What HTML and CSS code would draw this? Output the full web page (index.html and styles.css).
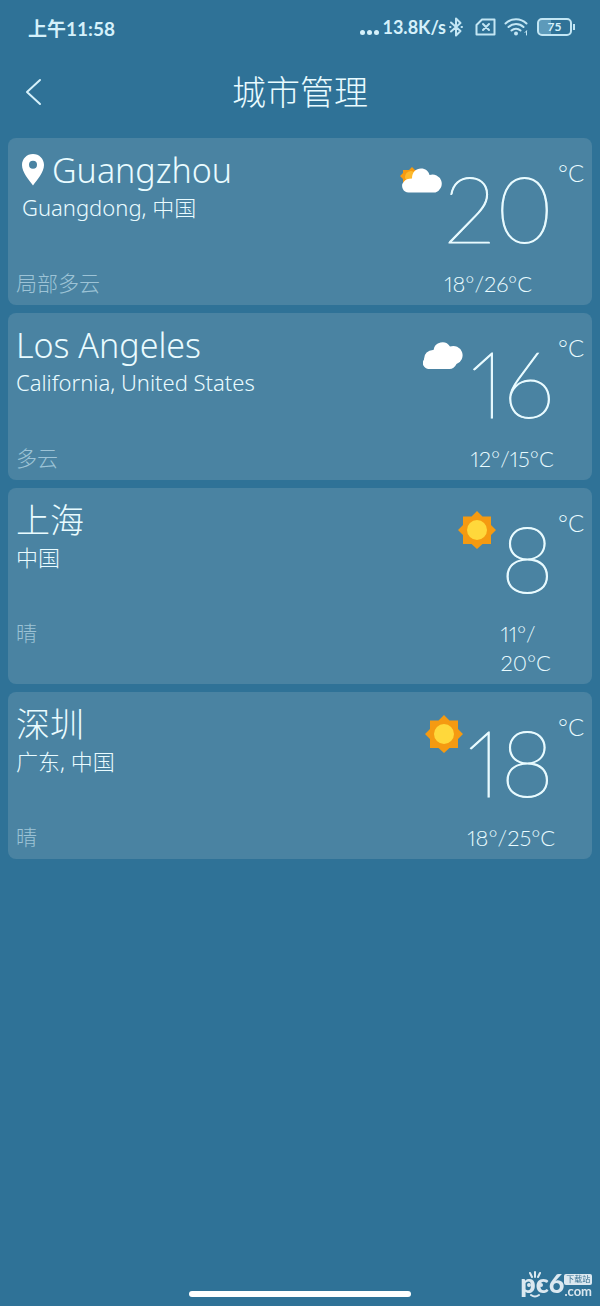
FILE: index.html
```
<!DOCTYPE html>
<html lang="zh-CN">
<head>
	<title>城市管理</title>
	<meta charset="UTF-8">
	<meta name="viewport" content="width=device-width, initial-scale=1">
	<link rel="stylesheet" href="styles.css">
</head>
<body>

<div class="status">
	<span class="clock">上午11:58</span>
	<span class="dots"><i></i><i></i><i></i></span>
	<span class="speed">13.8K/s</span>
	<svg class="bluetooth" width="14" height="20" viewBox="0 0 14 20"><path d="M2 5.500l9.500 8.500L7 18.500V1.500L11.500 6 2 14.500M1 10h.5M12.500 10h.5"/></svg>
	<svg class="sim" width="22" height="18" viewBox="0 0 22 18"><path d="M7 1.500h12.500v15H1.500V7zM8 6l6 6M14 6l-6 6"/></svg>
	<svg class="wifi" width="26" height="20" viewBox="0 0 26 20"><path d="M1.500 6.500a15 15 0 0 1 21 0M4.500 10a11 11 0 0 1 15 0M7.500 13.500a6.500 6.500 0 0 1 9 0"/><circle cx="12" cy="16.500" r="2"/><path class="thin" d="M22.500 14v4M21 15.500l1.500-1.500"/></svg>
	<span class="battery">75</span>
</div>

<header>
	<button class="back" aria-label="返回"><svg width="18" height="28" viewBox="0 0 18 28"><path d="M16 2L3 14l13 12"/></svg></button>
	<h1>城市管理</h1>
</header>

<ul class="cities">
	<li class="card here">
		<h2><svg class="pin" width="22" height="32" viewBox="0 0 22 32"><path fill-rule="evenodd" d="M11 0C4.800 0 0 4.800 0 11c0 7.500 7 15 11 20.500C15 26 22 18.500 22 11 22 4.800 17.200 0 11 0zm0 6.800a4 4 0 1 1 0 8 4 4 0 0 1 0-8z"/></svg>Guangzhou</h2>
		<p class="region">Guangdong, 中国</p>
		<p class="sky">局部多云</p>
		<svg class="icon" width="44" height="26" viewBox="0 0 44 26"><path fill="#f59a11" d="M12 0l3 3h5v12H6l-3 1V12L0 9l3-3V3h6z"/><circle cx="11" cy="10" r="6" fill="#fdb92c"/><path fill="#fff" d="M9 25.500a6.500 6.500 0 0 1-5-11q2-3 8-3C12 5 16 1.500 21 1.500c4.500 0 7.500 2.500 8.500 6.500a9 9 0 1 1 6 17.500z"/></svg>
		<div class="temp">20</div>
		<p class="range">18°/<wbr>26°C</p>
		<span class="unit">°C</span>
	</li>
	<li class="card">
		<h2>Los Angeles</h2>
		<p class="region">California, United States</p>
		<p class="sky">多云</p>
		<svg class="icon cloud" width="42" height="29" viewBox="0 0 42 29"><path fill="#fff" d="M6 29a6 6 0 0 1-5-9.500A9 9 0 0 1 10.500 10 9 9 0 0 1 27 6.500a9 9 0 1 1 6.500 17.500q-2.500 5-7 5z"/></svg>
		<div class="temp">16</div>
		<p class="range">12°/<wbr>15°C</p>
		<span class="unit">°C</span>
	</li>
	<li class="card">
		<h2>上海</h2>
		<p class="region">中国</p>
		<p class="sky">晴</p>
		<svg class="icon sun" width="38" height="38" viewBox="0 0 38 38"><path fill="#f59a11" d="M19 0l5.500 5.500H33V14l5 5-5 5v9h-8.500L19 38l-5.500-5H5v-9l-5-5 5-5V5.500h8.500z"/><circle cx="19" cy="19" r="10" fill="#ffd83b"/></svg>
		<div class="temp">8</div>
		<p class="range">11°/<wbr>20°C</p>
		<span class="unit">°C</span>
	</li>
	<li class="card">
		<h2>深圳</h2>
		<p class="region">广东, 中国</p>
		<p class="sky">晴</p>
		<svg class="icon sun" width="38" height="38" viewBox="0 0 38 38"><path fill="#f59a11" d="M19 0l5.500 5.500H33V14l5 5-5 5v9h-8.500L19 38l-5.500-5H5v-9l-5-5 5-5V5.500h8.500z"/><circle cx="19" cy="19" r="10" fill="#ffd83b"/></svg>
		<div class="temp">18</div>
		<p class="range">18°/<wbr>25°C</p>
		<span class="unit">°C</span>
	</li>
</ul>

<div class="homebar"></div>

<div class="watermark">
	<b>pc6</b>
	<span><small>下载站</small><em>.com</em></span>
	<svg class="face" width="30" height="28" viewBox="0 0 30 28"><path d="M10 2l2 4M15 1v5M20 2l-2 4M11 24q4 3 8 0"/><circle cx="9" cy="14" r="1"/><circle cx="21" cy="14" r="1"/></svg>
</div>

</body>
</html>
```
FILE: styles.css
```
html
{
	background:#2f7297;
	color:#e9fbff;
}
body
{
	margin:0;
	min-height:100vh;
	display:flex;
	flex-direction:column;
	font-family:"Noto Sans", "Noto Sans CJK SC", sans-serif;
	font-weight:300;
}
h1, h2, p, ul { margin:0; padding:0; font-weight:300; }
svg { display:block; fill:none; stroke-linecap:round; stroke-linejoin:round; }

.status
{
	display:flex;
	align-items:center;
	height:54px;
	padding:0 24px 0 28px;
	font-family:Lato, "Noto Sans CJK SC", sans-serif;
	font-size:18px;
	font-weight:700;
	color:#d5f1fb;
}
.status svg { stroke:#c3e6f4; stroke-width:2; }
.clock { margin-right:auto; font-size:19px; }
.dots
{
	display:flex;
	gap:2px;
	margin:10px 3px 0 0;
}
.dots i
{
	width:5px;
	height:5px;
	border-radius:50%;
	background:#d5f1fb;
}
.bluetooth { margin:0 12px 0 3px; }
.wifi { margin:0 7px; }
.wifi circle { fill:#c3e6f4; stroke:none; }
.wifi .thin { stroke-width:1; }
.battery
{
	position:relative;
	box-sizing:border-box;
	width:35px;
	height:18px;
	margin-right:4px;
	border:2px solid #c3e6f4;
	border-radius:5px;
	background:linear-gradient(90deg, #5d9aba 40%, transparent 40%);
	font-size:12px;
	line-height:14px;
	text-align:center;
}
.battery::after
{
	content:"";
	position:absolute;
	left:34px;
	top:4px;
	width:2px;
	height:6px;
	background:#c3e6f4;
}

header
{
	display:grid;
	grid-template-columns:48px 1fr 48px;
	align-items:center;
	height:76px;
	padding:0 8px;
	margin-bottom:8px;
}
.back
{
	padding:0 0 0 16px;
	border:0;
	background:none;
}
.back svg { stroke:#d5f1fb; stroke-width:2; }
h1
{
	font-size:34px;
	line-height:48px;
	text-align:center;
}

.cities
{
	list-style:none;
	display:flex;
	flex-direction:column;
	gap:8px;
	padding:0 8px;
}
.card
{
	display:grid;
	grid-template-columns:1fr auto auto 26px;
	grid-template-rows:48px 75px auto;
	padding:8px 8px 7px;
	border-radius:8px;
	background:#4a83a2;
}
h2
{
	grid-area:1 / 1;
	display:flex;
	align-items:center;
	gap:8px;
	font-size:34px;
	line-height:48px;
}
.pin { fill:#fff; }
.here h2, .here .region { padding-left:6px; }
.region
{
	grid-area:2 / 1;
	font-size:22px;
	line-height:26px;
}
.sky
{
	grid-area:3 / 1;
	font-size:21px;
	line-height:29px;
	color:#9dc3d6;
}
.icon
{
	grid-area:1 / 2 / 3 / 3;
	margin:21px 0 0;
}
.cloud { margin:19px 6px 0 0; }
.sun { margin:15px 4px 0 0; }
.temp
{
	grid-area:1 / 3 / 3 / 4;
	padding-right:4px;
	font-family:Lato, sans-serif;
	font-size:92px;
	font-weight:100;
	font-variant-numeric:proportional-nums;
	line-height:124px;
	-webkit-text-stroke:1px #e9fbff;
}
.range
{
	grid-area:3 / 3;
	width:0;
	min-width:calc(100% + 8px);
	font-family:Lato, sans-serif;
	font-size:22px;
	font-variant-numeric:proportional-nums;
	line-height:29px;
}
.unit
{
	grid-area:1 / 4;
	font-family:Lato, sans-serif;
	font-size:24px;
	line-height:54px;
}

.homebar
{
	width:37%;
	height:6px;
	margin:auto auto 9px;
	border-radius:3px;
	background:#fff;
}

.watermark
{
	position:fixed;
	right:8px;
	bottom:8px;
	display:flex;
	align-items:flex-end;
	font-family:Lato, "Noto Sans CJK SC", sans-serif;
	color:#dbe8f0;
}
.watermark b
{
	font-size:27px;
	font-weight:900;
	line-height:30px;
}
.watermark span
{
	display:flex;
	flex-direction:column;
}
.watermark small
{
	padding:0 1px;
	border-radius:2px;
	background:#dbe8f0;
	color:#356f90;
	font-size:8px;
	font-weight:400;
	line-height:11px;
	text-align:center;
}
.watermark em
{
	font-size:13px;
	font-style:normal;
	font-weight:700;
	line-height:13px;
}
.face
{
	position:absolute;
	left:0;
	bottom:-1px;
	stroke:#dbe8f0;
	stroke-width:2;
}
```
